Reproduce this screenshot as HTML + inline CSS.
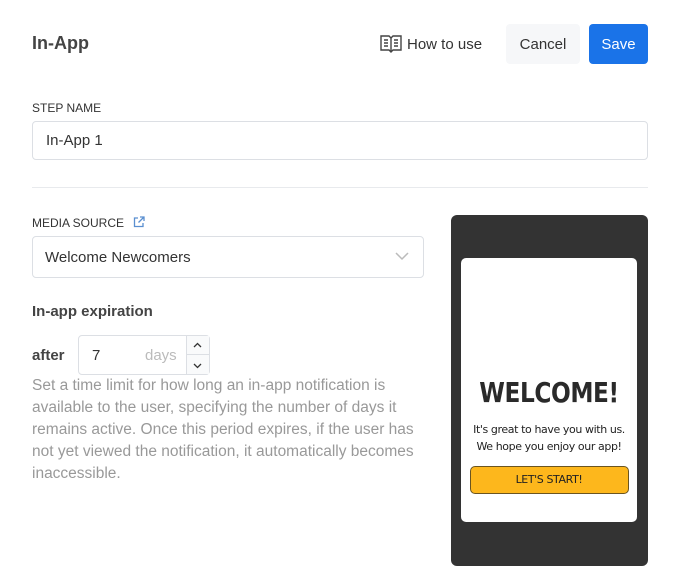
<!DOCTYPE html>
<html><head><style>
*{box-sizing:border-box;margin:0;padding:0}
body{width:680px;height:586px;background:#fff;font-family:"Liberation Sans",sans-serif;color:#333;position:relative;overflow:hidden}
.a{position:absolute}
</style></head><body>
<div class="a" style="left:32px;top:33px;font-size:18px;font-weight:bold;color:#444">In-App</div>
<svg class="a" style="left:380px;top:34px" width="22" height="20" viewBox="0 0 22 20" fill="none" stroke="#444" stroke-width="1.4"><path d="M1 2h8l2 2 2-2h8v14h-8l-2 2-2-2H1z"/><path d="M11 4v14"/><path d="M4 6h4M4 9h4M4 12h4M14 6h4M14 9h4M14 12h4"/></svg>
<div class="a" style="left:407px;top:36px;font-size:15px;color:#333">How to use</div>
<div class="a" style="left:506px;top:24px;width:74px;height:40px;background:#f6f7f9;border-radius:4px;font-size:15px;color:#333;text-align:center;line-height:42px">Cancel</div>
<div class="a" style="left:589px;top:24px;width:59px;height:40px;background:#1a73e8;border-radius:4px;font-size:15px;color:#fff;text-align:center;line-height:42px">Save</div>
<div class="a" style="left:32px;top:101px;font-size:12px;color:#333">STEP NAME</div>
<div class="a" style="left:32px;top:121px;width:616px;height:39px;border:1px solid #dcdfe4;border-radius:4px;font-size:15px;line-height:38px;padding-left:13px;color:#333">In-App 1</div>
<div class="a" style="left:32px;top:187px;width:616px;height:1px;background:#e8eaed"></div>
<div class="a" style="left:32px;top:216px;font-size:12px;color:#333">MEDIA SOURCE</div>
<svg class="a" style="left:133px;top:216px" width="12" height="12" viewBox="0 0 12 12" fill="none" stroke="#5a8fd0" stroke-width="1.3"><path d="M5 2H1.5v8.5H10V7"/><path d="M7 1h4v4M11 1L5.5 6.5"/></svg>
<div class="a" style="left:32px;top:236px;width:392px;height:42px;border:1px solid #dcdfe4;border-radius:4px;font-size:15px;line-height:41px;padding-left:12px;color:#333">Welcome Newcomers</div>
<svg class="a" style="left:395px;top:252px" width="14" height="9" viewBox="0 0 14 9" fill="none" stroke="#bbb" stroke-width="1.5"><path d="M1 1l6 6 6-6"/></svg>
<div class="a" style="left:32px;top:303px;font-size:15px;font-weight:bold;color:#444">In-app expiration</div>
<div class="a" style="left:32px;top:347px;font-size:15px;font-weight:bold;color:#444">after</div>
<div class="a" style="left:78px;top:335px;width:132px;height:40px;border:1px solid #dcdfe4;border-radius:4px"></div>
<div class="a" style="left:92px;top:347px;font-size:15px;color:#333">7</div>
<div class="a" style="left:145px;top:347px;font-size:15px;color:#bbb">days</div>
<div class="a" style="left:186px;top:336px;width:23px;height:38px;border-left:1px solid #dcdfe4;background:#f9fafb"></div>
<div class="a" style="left:186px;top:354px;width:23px;height:1px;background:#dcdfe4"></div>
<svg class="a" style="left:193px;top:341px" width="9" height="30" viewBox="0 0 9 30" fill="none" stroke="#333" stroke-width="1.3"><path d="M1 6l3.5-3.5L8 6M1 23l3.5 3.5L8 23"/></svg>
<div class="a" style="left:32px;top:375px;width:392px;font-size:15.5px;line-height:22px;color:#999">Set a time limit for how long an in-app notification is available to the user, specifying the number of days it remains active. Once this period expires, if the user has not yet viewed the notification, it automatically becomes inaccessible.</div>
<div class="a" style="left:451px;top:215px;width:197px;height:351px;background:#333;border-radius:6px"></div>
<div class="a" style="left:461px;top:258px;width:176px;height:264px;background:#fff;border-radius:5px;text-align:center">
<div style="margin-top:118px;font-size:28px;font-weight:bold;color:#2a2a2a;font-family:'DejaVu Sans',sans-serif;letter-spacing:-0.5px;transform:scaleX(0.83)">WELCOME!</div>
<div style="margin-top:12px;font-size:11px;line-height:17px;color:#222;font-family:'DejaVu Sans',sans-serif;letter-spacing:-0.4px">It's great to have you with us.<br>We hope you enjoy our app!</div>
<div style="margin:11px auto 0;width:159px;height:28px;background:#fdb71c;border:1px solid #6b5520;border-radius:5px;font-size:11px;line-height:26px;color:#222;font-family:'DejaVu Sans',sans-serif;letter-spacing:-0.4px">LET'S START!</div>
</div>
</body></html>
